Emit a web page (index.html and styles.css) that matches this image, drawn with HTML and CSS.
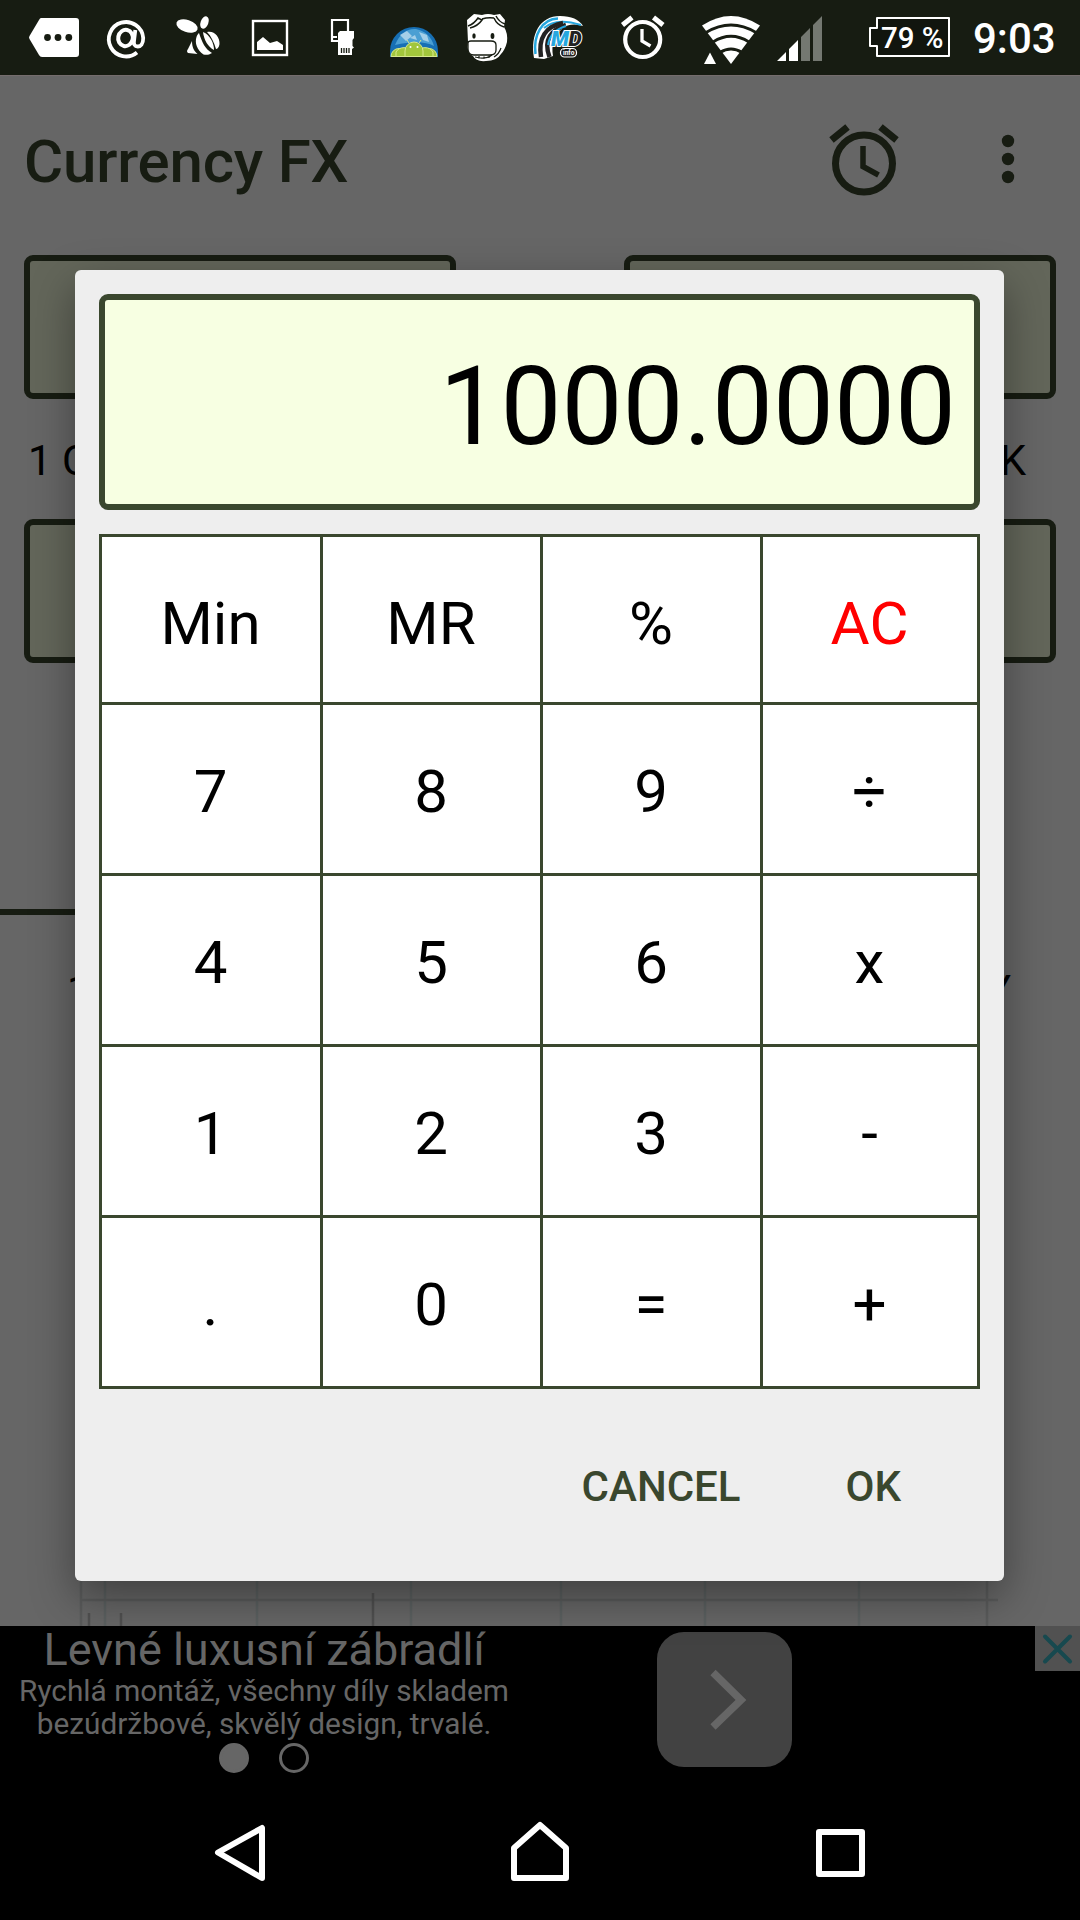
FILE: index.html
```html
<!DOCTYPE html>
<html lang="cs">
<head>
  <meta charset="UTF-8">
  <meta name="viewport" content="width=device-width, initial-scale=1.0">
  <title>Currency FX</title>
  <link rel="stylesheet" href="styles.css">
</head>
<body>

  <header class="status-bar">
    <svg width="93" height="75" viewBox="0 0 93 75">
      <path d="M41 18H76q3 0 3 3V54q0 3-3 3H42q-2 0-3-2L29.500 39q-1-1.500 0-3L39 20q1-2 2-2z" fill="#fff"/>
      <g fill="#171c12"><circle cx="47.500" cy="37.500" r="3.400"/><circle cx="58" cy="37.500" r="3.400"/><circle cx="68.800" cy="37.500" r="3.400"/></g>
    </svg>
    <svg width="67" height="75" viewBox="93 0 67 75" fill="none" stroke="#fff">
      <path d="M137 52.500A17.200 17.200 0 1 1 143.200 38C143.200 44 140.500 46.500 137.800 46.500C134.500 46.500 133.500 44 134 41L135.300 30" stroke-width="3.800"/>
      <ellipse cx="125.500" cy="38" rx="7.300" ry="8.200" transform="rotate(12 125.500 38)" stroke-width="4"/>
    </svg>
    <svg width="75" height="75" viewBox="160 0 75 75" fill="#fff">
      <ellipse cx="187" cy="26" rx="11" ry="6" transform="rotate(18 187 26)"/>
      <ellipse cx="204.500" cy="22.500" rx="3.900" ry="6.500" transform="rotate(20 204.500 22.500)"/>
      <path d="M207 32C214 30 220 37 219.500 44C219 48 217 49 216 49C214 42 211 36 207 32z"/>
      <path d="M199 33C202 42 205 49 212 53C209 55 206 55 203.500 54.500C197 50 194.500 43 196.500 37C197 35 198 34 199 33z"/>
      <path d="M203 32C210 35 214 43 214 50C208 47 204 40 203 32z"/>
      <path d="M192 41C192 47 194 51 197.500 54L188 53C186.500 52 187 50 188 49z"/>
    </svg>
    <svg width="75" height="75" viewBox="235 0 75 75">
      <rect x="253" y="21" width="34" height="34" fill="none" stroke="#fff" stroke-width="2.400"/>
      <path d="M257 50V42L263 37L270 43L277 41L283 45V50z" fill="#fff"/>
    </svg>
    <svg width="65" height="75" viewBox="310 0 65 75">
      <path d="M348 31V20H332V41H338M333 37H337" fill="none" stroke="#fff" stroke-width="2.200"/>
      <path d="M340 31H354V38L352.500 40V46L354 47.500L352 49V55H338V33z" fill="#fff"/>
      <path d="M341.500 48V53M344 48V53M346.500 48V53M349 48V53" stroke="#171c12" stroke-width="1.300"/>
    </svg>
    <svg width="77" height="75" viewBox="375 0 77 75">
      <path d="M390 57V51A24 24 0 0 1 438 51V57z" fill="#176fb4"/>
      <path d="M395 45Q402 28 416 29Q430 32 434 46Q421 39 395 45z" fill="#4b9fd3"/>
      <path d="M400 35l7-4l5 5l-6 5zM419 32l8 3l2 7l-6-2zM410 38l5-3l2 5z" fill="#a5cfe8"/>
      <g fill="#a2c63c" stroke="#d7e88c" stroke-width="1">
        <path d="M391 56.500A8 8 0 0 1 407 56.500zM421 56.500A8 8 0 0 1 437 56.500z"/>
        <path d="M396 56.500V52A9 8 0 0 1 412 52V56.500zM417 56.500V52A9 8 0 0 1 433 52V56.500z"/>
        <path d="M405 56.500V51A9 9 0 0 1 423 51V56.500zM409 43L407 40M419 43L421 40"/>
      </g>
      <circle cx="410.500" cy="47" r="1" fill="#fff"/><circle cx="417.500" cy="47" r="1" fill="#fff"/>
    </svg>
    <svg width="66" height="75" viewBox="452 0 66 75">
      <path d="M467 20L474 14L482 15Q488 13 494 15L500 14L505 20L504 27Q508 33 507 42Q505 50 501 54Q497 61 486 61Q476 62 473 56Q466 54 468 42z" fill="#fff"/>
      <g fill="none" stroke="#171c12">
        <path d="M468 26Q474 24 478 18L482 20Q478 26 470 28M482 19Q488 17 494 18M494 18Q497 25 504 27M496 16Q499 22 505 24" stroke-width="1.500"/>
        <path d="M468 43Q468 41 471 41H491Q496 41 496 45V50Q496 55 490 55H474Q468 55 468 49z" stroke-width="1.300"/>
        <path d="M475 57Q485 60 492 55M501 48Q499 54 494 57M479 56v2.500M484 56.500v2.500M489 55.500v2.500" stroke-width="1.200"/>
      </g>
      <ellipse cx="474" cy="36" rx="1.700" ry="2.700" fill="#171c12"/><ellipse cx="492.500" cy="36" rx="1.900" ry="2.900" fill="#171c12"/>
    </svg>
    <svg class="md-icon" width="84" height="75" viewBox="518 0 84 75">
      <path d="M534 58C530 34 540 16 560 16Q577 16 583 26Q570 22 562 29Q550 39 553 56L544 59z" fill="#fff"/>
      <g fill="none">
        <path d="M535.500 54C533 35 542 19 558 18.500" stroke="#26a7df" stroke-width="2.500"/>
        <path d="M544 28Q556 17 581 25" stroke="#26a7df" stroke-width="2"/>
        <path d="M541 57C538 38 546 26 563 23" stroke="#222" stroke-width="4.500"/>
        <path d="M549.500 57C543 40 551 30 566 25" stroke="#222" stroke-width="4.500"/>
        <path d="M548 45Q550 31 566 26" stroke="#26a7df" stroke-width="2"/>
      </g>
      <text class="md-m" x="551" y="45.500">M</text><text class="md-d" x="568.500" y="45.500">D</text>
      <rect x="560.500" y="48.500" width="16" height="8.500" rx="4" fill="#222" stroke="#fff" stroke-width="1.200"/>
      <text class="md-info" x="563" y="55.300">info</text>
    </svg>
    <svg width="83" height="75" viewBox="602 0 83 75" fill="none" stroke="#fff">
      <circle cx="642.700" cy="39.500" r="17.500" stroke-width="4.200"/>
      <path d="M622.500 25L632 17.500M653.500 17.500L663 25" stroke-width="5"/>
      <path d="M642 29V41L650.500 46" stroke-width="3.300"/>
    </svg>
    <svg width="83" height="75" viewBox="685 0 83 75">
      <path d="M731 64L702 25.500Q731 6.500 760 25.500z" fill="#fff"/>
      <g fill="none" stroke="#171c12" stroke-width="2.800">
        <path d="M706 32.500Q731 17.500 756 32.500M713 42Q731 30.500 749 42M720 52.500Q731 45.500 742 52.500"/>
      </g>
      <path d="M710 52.500L716 64H704z" fill="#fff"/>
    </svg>
    <svg width="87" height="75" viewBox="768 0 87 75">
      <path d="M777 61L786 52V61zM789 61V49L798 40V61z" fill="#fff"/>
      <path d="M801 61V37L810 28V61zM813 61V25L822 16V61z" fill="#747871"/>
    </svg>
    <svg class="battery" width="103" height="75" viewBox="855 0 103 75">
      <path d="M877 18H949V56H877V46H870V28H877z" fill="#11150e" stroke="#fff" stroke-width="2" stroke-linejoin="round"/>
      <text x="881" y="47.700">79 %</text>
    </svg>
    <span class="clock">9:03</span>
  </header>

  <main class="app">
    <div class="app-bar">
      <h1>Currency FX</h1>
      <svg width="252" height="90" viewBox="828 114 252 90" fill="none" stroke="#171c12">
        <circle cx="864" cy="163.500" r="28.500" stroke-width="7"/>
        <path d="M831.500 140L847.500 127M880.500 127L896.500 140" stroke-width="7"/>
        <path d="M863 146V166.500L878.500 175" stroke-width="5.500"/>
        <g fill="#171c12" stroke="none"><circle cx="1008" cy="141" r="6.200"/><circle cx="1008" cy="159" r="6.200"/><circle cx="1008" cy="177" r="6.200"/></g>
      </svg>
    </div>

    <div class="fields"><div class="field"></div><div class="field"></div></div>
    <div class="rates"><span>1 C</span><span>K</span></div>
    <div class="fields"><div class="field"></div><div class="field"></div></div>
    <div class="tab-line"></div>
    <div class="ranges"><span>1</span><span>Y</span></div>

    <svg class="chart" width="1080" height="66" viewBox="0 1560 1080 66" fill="none">
      <path d="M105 1560V1626M257 1560V1626M411 1560V1626M561 1560V1626M705 1560V1626M859 1560V1626" stroke="#5b6060" stroke-width="2.500"/>
      <path d="M81 1560V1626M987 1560V1626M81 1600H998" stroke="#5a5b5b" stroke-width="2.500"/>
      <path d="M89 1613V1626M121 1613V1626M373 1593V1626" stroke="#505050" stroke-width="2.500"/>
    </svg>
  </main>

  <section class="ad">
    <div class="ad-text">
      <h2>Levné luxusní zábradlí</h2>
      <p>Rychlá montáž, všechny díly skladem<br>bezúdržbové, skvělý design, trvalé.</p>
      <div class="dots"><i class="dot on"></i><i class="dot"></i></div>
    </div>
    <div class="ad-go">
      <svg width="135" height="135" viewBox="657 1632 135 135"><path d="M713 1672.500L741 1700L713 1727" fill="none" stroke="#666" stroke-width="7.500"/></svg>
    </div>
    <div class="ad-close">
      <svg width="45" height="45" viewBox="0 0 45 45"><path d="M10 10.500L35 35.500M35 10.500L10 35.500" stroke="#17494f" stroke-width="4" stroke-linecap="round"/></svg>
    </div>
  </section>

  <nav class="nav-bar">
    <svg width="60" height="66" viewBox="210 1820 60 66"><path d="M262 1828V1878L218 1852.500z"/></svg>
    <svg width="66" height="66" viewBox="508 1820 66 66"><path d="M514 1878V1848L540 1825L566 1848V1878z"/></svg>
    <svg width="56" height="66" viewBox="812 1820 56 66"><path d="M819 1832H862V1874H819z"/></svg>
  </nav>

  <div class="dialog">
    <div class="display">1000.0000</div>
    <div class="keys">
      <button class="top">Min</button><button class="top">MR</button><button class="top">%</button><button class="top clear">AC</button>
      <button>7</button><button>8</button><button>9</button><button>÷</button>
      <button>4</button><button>5</button><button>6</button><button>x</button>
      <button>1</button><button>2</button><button>3</button><button>-</button>
      <button>.</button><button>0</button><button>=</button><button>+</button>
    </div>
    <div class="actions">
      <button>CANCEL</button>
      <button>OK</button>
    </div>
  </div>

</body>
</html>
```
FILE: styles.css
```css
* { margin: 0; padding: 0; box-sizing: border-box; }
body { position: relative; width: 1080px; height: 1920px; overflow: hidden; background: #000; color: #000; font-family: Roboto, sans-serif; }
svg { display: block; flex: none; }
button { border: none; background: none; font-family: inherit; color: inherit; }

.status-bar { display: flex; height: 75px; background: #171c12; color: #fff; }
.clock { padding: 14px 0 0 15px; font-size: 42px; line-height: 50px; font-weight: 500; white-space: nowrap; }
.battery text { font-size: 29.500px; font-weight: 500; fill: #fff; }
.md-icon text { font-family: Roboto, sans-serif; font-weight: 900; font-style: italic; stroke: #fff; stroke-width: 2px; paint-order: stroke; }
.md-m { font-size: 21px; fill: #26a7df; }
.md-d { font-size: 21px; fill: #222; }
.md-icon .md-info { font-size: 6.500px; font-weight: 700; font-style: normal; fill: #fff; stroke: none; }

.app { height: 1551px; background: #666; display: flex; flex-direction: column; overflow: hidden; }
.app-bar { height: 180px; padding-left: 24px; display: flex; justify-content: space-between; align-items: flex-start; flex: none; border-top: 1px solid #756d6d; }
.app-bar h1 { padding-top: 50px; font-size: 60px; line-height: 72px; font-weight: 500; letter-spacing: -0.2px; color: #171c12; }
.app-bar svg { margin-top: 38px; }
.fields { display: flex; justify-content: space-between; padding: 0 24px; flex: none; }
.field { width: 432px; height: 144px; border: 6px solid #171c12; border-radius: 9px; background: #63665a; }
.rates { display: flex; justify-content: space-between; height: 120px; padding: 37px 54px 0 28px; font-size: 42px; line-height: 50px; flex: none; }
.tab-line { width: 540px; height: 6px; margin-top: 246px; background: #171c12; flex: none; }
.ranges { display: flex; justify-content: space-between; padding: 51px 69px 0 67px; font-size: 42px; line-height: 50px; }
.chart { margin-top: auto; }

.ad { display: flex; align-items: flex-start; height: 164px; color: #666; }
.ad-text { width: 528px; text-align: center; }
.ad-text h2 { height: 58px; padding-top: 1px; font-size: 45px; line-height: 46px; font-weight: 400; }
.ad-text p { margin-top: -10px; font-size: 29.800px; line-height: 33px; white-space: nowrap; }
.dots { display: flex; justify-content: center; gap: 30px; padding-top: 3px; }
.dot { width: 30px; height: 30px; border: 3px solid #666; border-radius: 50%; }
.dot.on { background: #666; }
.ad-go { width: 135px; height: 135px; margin: 6px 0 0 129px; border-radius: 27px; background: #424242; }
.ad-close { width: 45px; height: 45px; margin-left: auto; background: #515151; }

.nav-bar { display: flex; justify-content: space-between; height: 130px; padding: 30px 212px 0 210px; }
.nav-bar path { fill: none; stroke: #fff; stroke-width: 6; stroke-linejoin: round; }

.dialog { position: absolute; left: 75px; top: 270px; width: 929px; height: 1311px; padding: 24px; border-radius: 6px; background: #eee; box-shadow: 0 16px 44px rgba(0, 0, 0, 0.38); }
.display { height: 216px; padding: 44px 18px 0 0; border: 6px solid #3a472e; border-radius: 9px; background: #f7ffe2; font-size: 108.500px; line-height: 126px; text-align: right; }
.keys { display: grid; grid-template-columns: 218px 217px 217px 214px; grid-template-rows: 165px repeat(4, 168px); gap: 3px; margin-top: 24px; padding: 3px; background: #3a472e; }
.keys button { padding: 5px 1px 0 0; background: #fff; font-size: 60px; line-height: 70px; }
.keys button.top { padding-top: 8px; }
.keys button.clear { color: #f00; }
.actions { display: flex; justify-content: flex-end; gap: 105px; padding: 73px 79px 0 0; }
.actions button { font-size: 42px; line-height: 50px; font-weight: 500; color: #3a472e; }
```
